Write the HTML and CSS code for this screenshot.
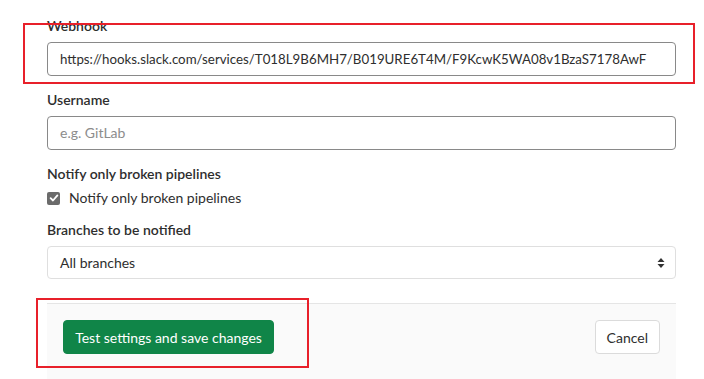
FILE: index.html
```html
<!DOCTYPE html>
<html>
<head>
<meta charset="utf-8">
<link rel="stylesheet" href="styles.css">
</head>
<body>
<div class="page">
  <p class="help-cut">This service will be triggered by the events and will post a message to Slack</p>
  <div class="group first">
    <label class="label">Webhook</label>
    <div class="input filled url">https://hooks.slack.com/services/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</div>
  </div>
  <div class="group">
    <label class="label">Username</label>
    <div class="input placeholder">e.g. GitLab</div>
  </div>
  <div class="group-check">
    <label class="label">Notify only broken pipelines</label>
    <div class="check-row">
      <span class="checkbox">
        <svg width="10" height="10" viewBox="0 0 10 10"><path d="M1.6 5.2 L4 7.5 L8.4 2.4" fill="none" stroke="#fff" stroke-width="1.8" stroke-linecap="round" stroke-linejoin="round"/></svg>
      </span>
      <span class="check-label">Notify only broken pipelines</span>
    </div>
  </div>
  <div class="group">
    <label class="label">Branches to be notified</label>
    <div class="select">
      <span>All branches</span>
      <svg class="caret" width="8" height="12" viewBox="0 0 8 12"><path d="M4 1 L7.5 5 L0.5 5 Z M4 11 L7.5 7 L0.5 7 Z" fill="#333"/></svg>
    </div>
  </div>
  <div class="footer">
    <button class="btn btn-success">Test settings and save changes</button>
    <button class="btn btn-default">Cancel</button>
  </div>
  <div class="mark mark-webhook"></div>
  <div class="mark mark-button"></div>
</div>
</body>
</html>
```
FILE: styles.css
```css
html, body {
  margin: 0;
  padding: 0;
  background: #fff;
}
body {
  font-family: Lato, "Noto Sans", sans-serif;
  font-size: 14px;
  color: #2e2e2e;
  overflow: hidden;
}
.page {
  position: relative;
  display: flow-root;
  box-sizing: border-box;
  height: 379px;
  overflow: hidden;
  padding: 0 28px 0 47px;
}
.help-cut {
  margin: -17px 0 0 0;
  line-height: 20px;
  height: 20px;
  color: #555;
  white-space: nowrap;
}
.group {
  margin-top: 14px;
}
.group.first {
  margin-top: 13px;
}
.label {
  display: block;
  font-weight: 600;
  line-height: 20px;
  margin-bottom: 6px;
  color: #2e2e2e;
}
.input {
  box-sizing: border-box;
  height: 34px;
  border: 1px solid #898989;
  border-radius: 4px;
  padding: 0 12px;
  line-height: 32px;
  white-space: nowrap;
  overflow: hidden;
}
.input.url {
  font-size: 13.3px;
}
.input.filled { color: #2e2e2e; }
.input.placeholder { color: #8c8c8c; }
.group-check {
  margin-top: 14px;
}
.group-check .label {
  margin-bottom: 4px;
}
.check-row {
  display: flex;
  align-items: center;
  height: 20px;
}
.checkbox {
  width: 13px;
  height: 13px;
  border-radius: 2px;
  background: #6b6b6b;
  display: flex;
  align-items: center;
  justify-content: center;
  margin-right: 9px;
}
.check-label {
  line-height: 20px;
}
.group-check + .group {
  margin-top: 12px;
}
.select {
  box-sizing: border-box;
  height: 33px;
  border: 1px solid #dfdfdf;
  border-radius: 4px;
  padding: 0 12px;
  display: flex;
  align-items: center;
  justify-content: space-between;
}
.caret {
  margin-right: -2px;
}
.footer {
  margin-top: 24px;
  background: #fafafa;
  border-top: 1px solid #e5e5e5;
  padding: 16px 16px 0 16px;
  height: 74px;
  display: flex;
  justify-content: space-between;
  align-items: flex-start;
}
.btn {
  font-family: inherit;
  font-size: 14px;
  height: 34px;
  border-radius: 4px;
  padding: 0 11px;
  white-space: nowrap;
  cursor: pointer;
}
.btn-success {
  background: #108548;
  color: #fff;
  border: 1px solid #108548;
  min-width: 211px;
}
.btn-default {
  background: #fff;
  color: #2e2e2e;
  border: 1px solid #dbdbdb;
  min-width: 63px;
}
.mark {
  position: absolute;
  border: 2px solid #e8202a;
  box-sizing: border-box;
}
.mark-webhook {
  left: 23px;
  top: 23px;
  width: 672px;
  height: 61px;
}
.mark-button {
  left: 36px;
  top: 298px;
  width: 273px;
  height: 70px;
}
```
